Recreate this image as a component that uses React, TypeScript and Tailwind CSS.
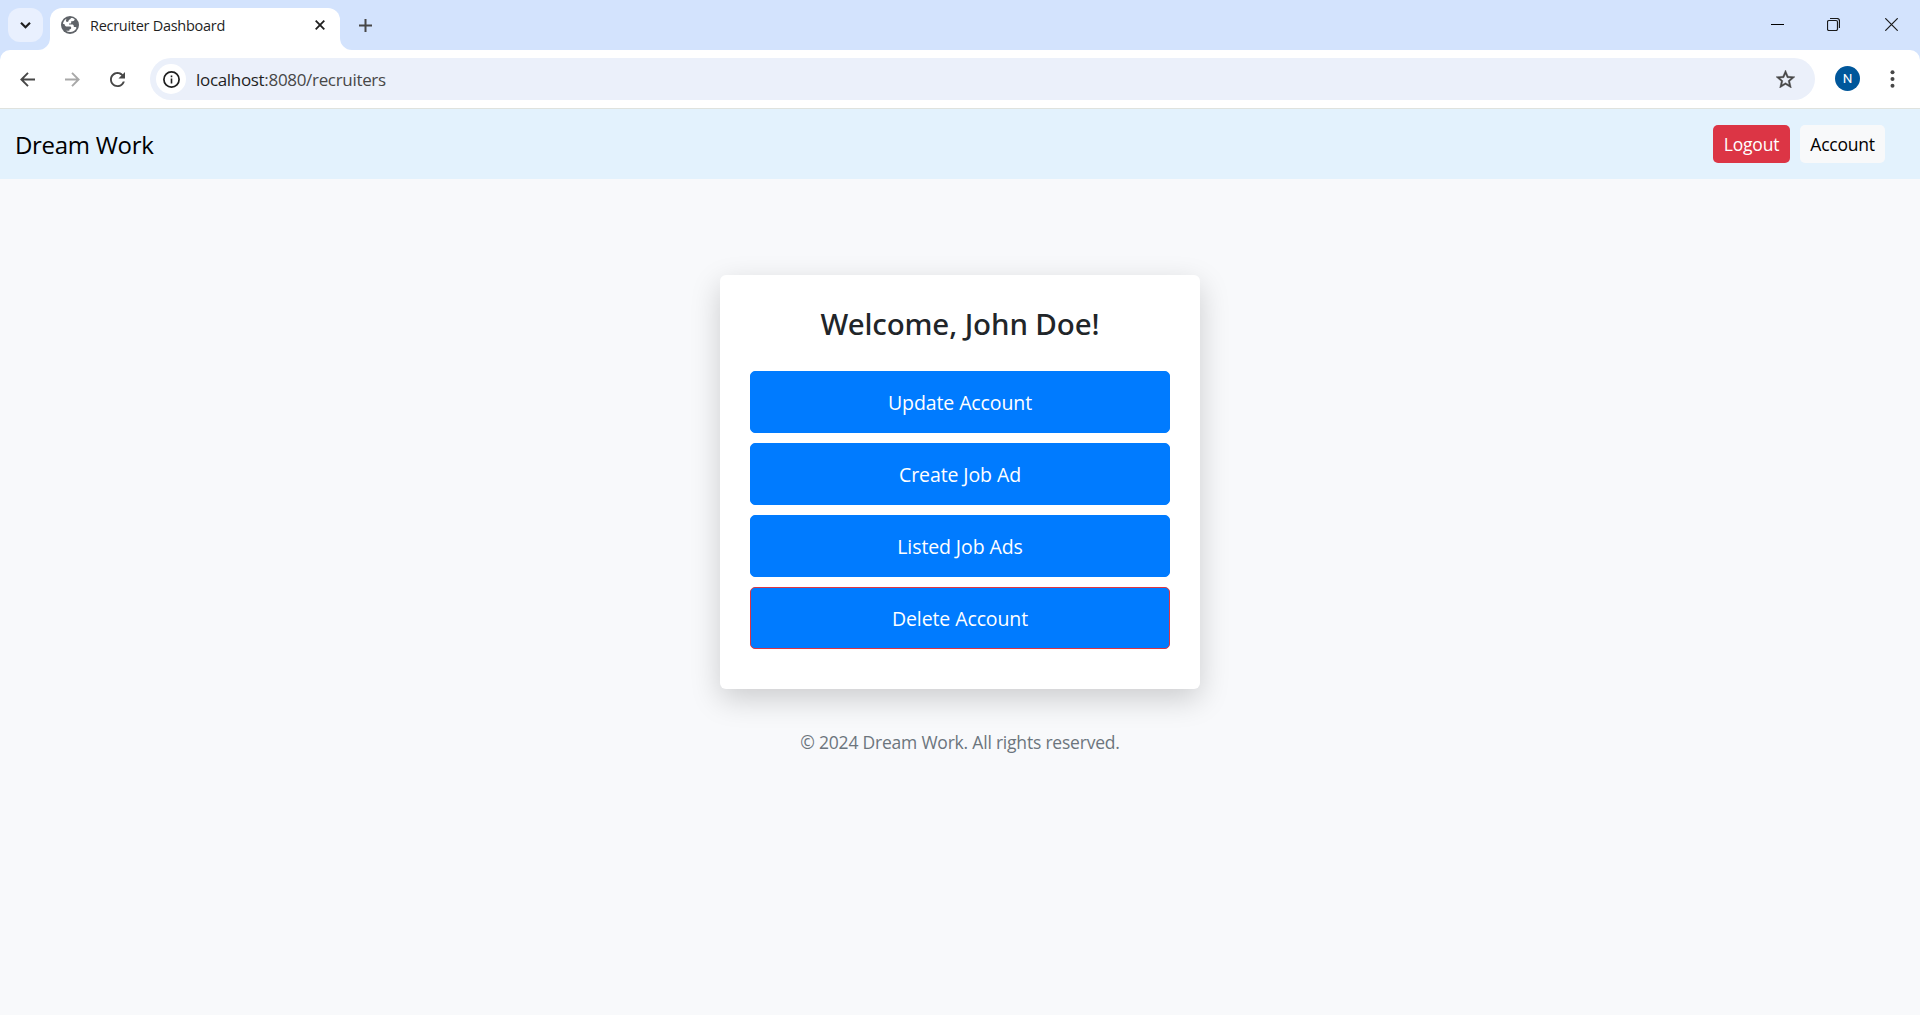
import React from "react";

function Globe() {
  return (
    <svg className="h-[18px] w-[18px] shrink-0" viewBox="0 0 18 18">
      <circle cx="9" cy="9" r="9" fill="#5f6368" />
      <path
        fill="#fff"
        d="M10 2C11.3 1.9 12.7 2.4 13.7 3.2C13.5 4.5 12.7 5.2 11.4 5.2H10.2V6.4C10.2 7 9.8 7.4 9.2 7.4H8V8.6H11C12.2 8.6 12.8 9.2 12.8 10.2V11H14C14.9 11 15.3 11.4 15.5 12C14.3 14.5 11.9 16 9.2 16C7.6 16 6.2 15.6 5 14.8H8.4V13.4C9.6 13.4 10.2 12.8 10.2 11.8C10.2 11 9.6 10.6 8.8 10.6H6.4C4.7 10.6 3.6 9.6 3.4 8H2C2.2 5.6 3.6 3.6 5.6 2.7C5 3.9 4.6 5 5.2 5.6C6 6.2 7.6 6 7.6 4.8C7.6 3.8 8.6 3.4 9.2 3.2Z"
      />
    </svg>
  );
}

function BrowserTabs() {
  return (
    <div className="flex h-[50px] items-start bg-[#d3e3fd]">
      <button className="mt-2 ml-2 flex h-[34px] w-[35px] items-center justify-center rounded-xl bg-[#e9f0fe]">
        <svg className="h-[11px] w-[11px]" viewBox="0 0 11 11" fill="none" stroke="#1f1f1f" strokeWidth="2.2">
          <path d="M1 2.7L5.5 7.2L10 2.7" />
        </svg>
      </button>
      <div className="relative mt-2 ml-[7px] flex h-[42px] w-[290px] items-start rounded-t-xl bg-white">
        <svg className="absolute bottom-0 -left-3 h-3 w-3" viewBox="0 0 12 12">
          <path d="M12 0V12H0A12 12 0 0 0 12 0Z" fill="#fff" />
        </svg>
        <svg className="absolute -right-3 bottom-0 h-3 w-3" viewBox="0 0 12 12">
          <path d="M0 0V12H12A12 12 0 0 1 0 0Z" fill="#fff" />
        </svg>
        <div className="flex h-[34px] w-full items-center pr-[15px] pl-[11px]">
          <Globe />
          <span className="ml-[11px] pt-px text-[14.5px] leading-5 tracking-[-0.28px] text-[#1f1f1f]">
            Recruiter Dashboard
          </span>
          <svg className="ml-auto h-[10px] w-[10px]" viewBox="0 0 10 10" stroke="#1f1f1f" strokeWidth="1.8">
            <path d="M.7 .7L9.3 9.3M9.3 .7L.7 9.3" />
          </svg>
        </div>
      </div>
      <svg className="mt-[19px] ml-[19px] h-[13px] w-[13px]" viewBox="0 0 13 13" stroke="#474747" strokeWidth="2">
        <path d="M6.5 0V13M0 6.5H13" />
      </svg>
      <div className="ml-auto flex items-center gap-[43px] pt-[18px] pr-[22px]">
        <svg className="h-[13px] w-[13px]" viewBox="0 0 13 13">
          <path d="M0 6H13V7H0Z" fill="#000" />
        </svg>
        <svg className="h-[13px] w-[13px]" viewBox="0 0 13 13" fill="none" stroke="#1a1a1a">
          <rect x=".5" y="2.5" width="10" height="10" rx="1.5" strokeWidth="1.2" />
          <path d="M3 .5H10A2.5 2.5 0 0 1 12.5 3V10" strokeWidth="1.2" />
        </svg>
        <svg className="ml-[2px] h-[13px] w-[13px]" viewBox="0 0 13 13" stroke="#1a1a1a" strokeWidth="1.2">
          <path d="M.3 .3L12.7 12.7M12.7 .3L.3 12.7" />
        </svg>
      </div>
    </div>
  );
}

function Toolbar() {
  return (
    <div className="bg-[#d3e3fd]">
      <div className="flex h-[59px] items-center rounded-t-[10px] border-b border-[#dfe2de] bg-white">
        <svg className="ml-5 h-[15px] w-[15px]" viewBox="0 0 15 15" fill="none" stroke="#474747" strokeWidth="1.9">
          <path d="M15 7.5H1.5M8 .9L1.4 7.5L8 14.1" />
        </svg>
        <svg className="ml-[30px] h-[15px] w-[15px]" viewBox="0 0 15 15" fill="none" stroke="#a8a8a8" strokeWidth="1.9">
          <path d="M0 7.5H13.5M7 .9L13.6 7.5L7 14.1" />
        </svg>
        <svg className="mr-px ml-[30px] h-[15px] w-[15px]" viewBox="4 4 16 16" fill="#474747">
          <path d="M17.65 6.35C16.2 4.9 14.21 4 12 4c-4.42 0-7.99 3.58-7.99 8s3.57 8 7.99 8c3.73 0 6.84-2.55 7.73-6h-2.08c-.82 2.33-3.04 4-5.65 4-3.31 0-6-2.69-6-6s2.69-6 6-6c1.66 0 3.14.69 4.22 1.78L13 11h7V4l-2.35 2.35z" />
        </svg>
        <div className="ml-6 flex h-[42px] grow items-center rounded-full bg-[#ebf0fa] pr-[20px] pl-[6px]">
          <span className="flex h-[30px] w-[30px] items-center justify-center rounded-full bg-white">
            <svg className="h-[17px] w-[17px]" viewBox="0 0 17 17" fill="none" stroke="#1f1f1f">
              <circle cx="8.5" cy="8.5" r="7.6" strokeWidth="1.7" />
              <path d="M8.5 7.5V12.5M8.5 4.6V6.2" strokeWidth="1.6" />
            </svg>
          </span>
          <span className="ml-[10px] pt-px text-[17px] leading-6 tracking-[-0.32px] text-[#1f1f1f]">
            localhost<span className="text-[#474747]">:8080/recruiters</span>
          </span>
          <svg className="ml-auto h-[18px] w-[19px]" viewBox="2 2 20 19" fill="#474747" stroke="#474747" strokeWidth=".4">
            <path d="M22 9.24l-7.19-.62L12 2 9.19 8.63 2 9.24l5.46 4.73L5.82 21 12 17.27 18.18 21l-1.63-7.03L22 9.24zM12 15.4l-3.76 2.27 1-4.28-3.32-2.88 4.38-.38L12 6.1l1.71 4.04 4.38.38-3.32 2.88 1 4.28L12 15.4z" />
          </svg>
        </div>
        <span className="mb-px ml-5 flex h-[25px] w-[25px] items-center justify-center rounded-full bg-[#00579b] font-['Roboto'] text-[13.5px] text-white">
          N
        </span>
        <svg className="mr-[25px] ml-[30px] h-[18px] w-[5px]" viewBox="0 0 5 18" fill="#474747">
          <circle cx="2.5" cy="2.2" r="2" />
          <circle cx="2.5" cy="9" r="2" />
          <circle cx="2.5" cy="15.8" r="2" />
        </svg>
      </div>
    </div>
  );
}

function Navbar() {
  return (
    <nav className="flex h-[70px] items-center bg-[#e3f2fd] pr-[35px] pl-[15px]">
      <a className="pt-px text-[24px] leading-9 tracking-[-0.3px] text-black">Dream Work</a>
      <div className="ml-auto flex gap-[10px]">
        <button className="h-[38px] w-[77px] rounded-[5px] bg-[#dc3545] text-[17.5px] tracking-[-0.2px] text-white">Logout</button>
        <button className="h-[38px] w-[85px] rounded-[5px] bg-[#f8f9fa] text-[17.5px] tracking-[-0.25px] text-black">Account</button>
      </div>
    </nav>
  );
}

const actions = [
  { label: "Update Account", border: "border-[#007bff]" },
  { label: "Create Job Ad", border: "border-[#007bff]" },
  { label: "Listed Job Ads", border: "border-[#007bff]" },
  { label: "Delete Account", border: "border-[#dc3545]" },
];

export default function App() {
  return (
    <div className="flex h-screen flex-col overflow-hidden bg-[#f8f9fb] font-['Open_Sans',sans-serif]">
      <BrowserTabs />
      <Toolbar />
      <Navbar />
      <main className="flex flex-col items-center pt-24">
        <section className="flex h-[414px] w-[480px] flex-col rounded-[6px] bg-white p-[30px] shadow-[0_10px_30px_rgba(0,0,0,0.18)]">
          <h2 className="mb-7 text-center font-['Noto_Sans'] text-[29.5px] leading-[38px] font-medium tracking-[-0.12px] text-[#212529]">
            Welcome, John Doe!
          </h2>
          <div className="flex flex-col gap-[10px]">
            {actions.map((a) => (
              <button key={a.label} className={`h-[62px] rounded-[5px] border bg-[#007bff] pt-[2px] text-[19.5px] tracking-[-0.1px] text-white ${a.border}`}>
                {a.label}
              </button>
            ))}
          </div>
        </section>
        <p className="mt-10 text-[17.5px] leading-[27px] tracking-[-0.21px] text-[#6c757d]">
          © 2024 Dream Work. All rights reserved.
        </p>
      </main>
    </div>
  );
}
